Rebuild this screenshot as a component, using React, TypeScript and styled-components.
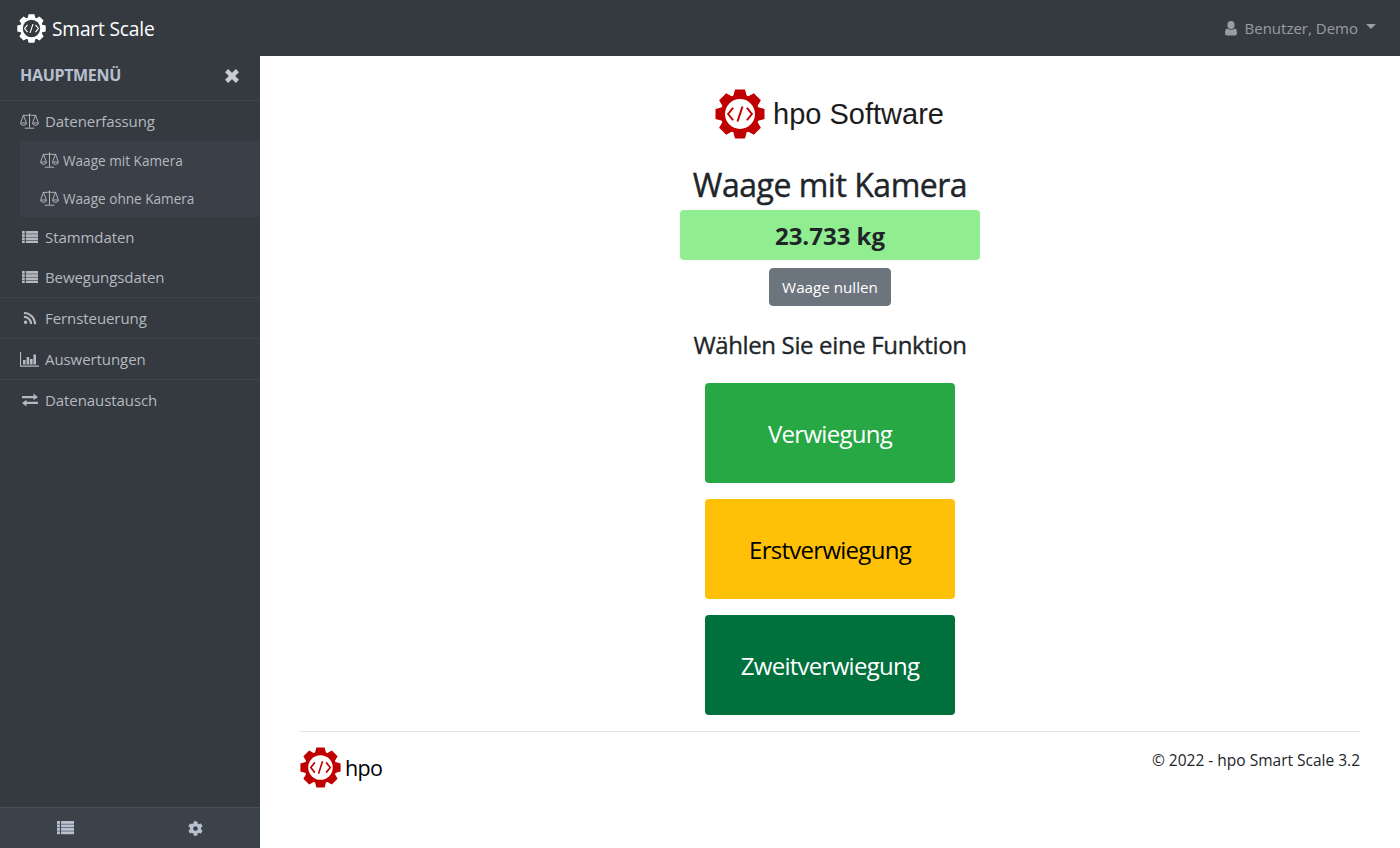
import React from "react";
import styled, { createGlobalStyle } from "styled-components";
import { FaRss, FaCog } from "react-icons/fa";

const Global = createGlobalStyle`
  html, body { margin: 0; padding: 0; height: 100%; background: #fff; overflow: hidden; }
  body { font-family: "Open Sans", "Noto Sans", "Liberation Sans", sans-serif; color: #212529; font-size: 16px; }
  * { box-sizing: border-box; }
`;

const Shell = styled.div`
  width: 1400px; height: 848px; display: flex; flex-direction: column;
`;
const TopBar = styled.header`
  height: 56px; flex: none; background: #343a40; display: flex; align-items: center;
  justify-content: space-between; padding: 0 16px 0 17px;
`;
const Brand = styled.div`
  display: flex; align-items: center; gap: 6px; color: #fff; font-size: 19.2px; letter-spacing: -0.01em;
`;
const UserMenu = styled.div`
  display: flex; align-items: center; color: rgba(255,255,255,.5); font-size: 15px;
  padding-right: 8px;
  svg { margin-right: 8px; }
`;
const Caret = styled.span`
  display: inline-block; margin-left: 8px; margin-top: -3px; border-top: 5px solid currentColor;
  border-left: 5px solid transparent; border-right: 5px solid transparent;
`;
const Body = styled.div`
  flex: 1; display: flex; min-height: 0;
`;
const Sidebar = styled.aside`
  width: 260px; flex: none; background: #343a40; display: flex; flex-direction: column;
`;
const SideHead = styled.div`
  height: 45px; display: flex; align-items: center; justify-content: space-between;
  padding: 0 20px 6px; color: #b8c0cf; font-weight: 700; font-size: 16px; letter-spacing: -0.02em;
  border-bottom: 1px solid #3c434a;
  svg { margin-top: 2px; }
`;
const Nav = styled.nav`
  flex: 1; display: flex; flex-direction: column;
`;
const Item = styled.div<{ $h: number; $line?: boolean }>`
  height: ${p => p.$h}px; display: flex; align-items: center; padding-left: 20px; gap: 6px;
  color: #b4b9bf; font-size: 15px; letter-spacing: -0.005em;
  border-bottom: ${p => (p.$line ? "1px solid #3c434a" : "none")};
`;
const IconBox = styled.span`
  width: 19px; display: inline-flex; justify-content: center; align-items: center; color: #b4b9bf;
  svg { display: block; }
`;
const SubMenu = styled.div`
  margin-left: 20px; background: #3b4048; display: flex; flex-direction: column;
`;
const SubItem = styled.div`
  height: 38px; display: flex; align-items: center; padding-left: 20px; gap: 4px;
  color: #b4b9bf; font-size: 13.6px;
`;
const SideFoot = styled.div`
  height: 41px; flex: none; background: #3c424a; border-top: 1px solid #4a5057; display: flex;
  align-items: center; color: #b8c0cf; font-size: 14px;
`;
const FootCell = styled.div`
  flex: 1; display: flex; justify-content: center; align-items: center;
`;
const Main = styled.main`
  flex: 1; padding: 0 40px; display: flex; flex-direction: column; background: #fff;
`;
const Center = styled.div`
  display: flex; flex-direction: column; align-items: center; padding-top: 33px;
`;
const Logo = styled.div`
  display: flex; align-items: center; gap: 8px; height: 50px; color: #1c1c1c;
  font-family: "Liberation Sans", Arial, sans-serif; font-size: 29px; margin-left: -1px;
`;
const Title = styled.h1`
  margin: 27px 0 0; font-size: 32px; line-height: 38px; font-weight: 500; letter-spacing: -0.015em;
  -webkit-text-stroke: 0.4px #212529;
`;
const Weight = styled.div`
  width: 300px; height: 50px; margin-top: 6px; background: #90ee90; border-radius: 4px;
  display: flex; align-items: center; justify-content: center; font-size: 24px; font-weight: 700;
`;
const ZeroButton = styled.button`
  margin-top: 8px; height: 38px; width: 122px; border: 1px solid #6c757d; background: #6c757d; color: #fff;
  font: inherit; font-size: 15.2px; border-radius: 4px; padding: 0;
`;
const Sub = styled.h2`
  margin: 24px 0 0; font-size: 24px; line-height: 29px; font-weight: 500; letter-spacing: -0.015em;
  -webkit-text-stroke: 0.35px #212529;
`;
const Actions = styled.div`
  margin-top: 24px; display: flex; flex-direction: column; gap: 16px;
`;
const Action = styled.button<{ $bg: string; $fg: string }>`
  width: 250px; height: 100px; border: 0; border-radius: 4px; background: ${p => p.$bg}; color: ${p => p.$fg};
  font: inherit; font-size: 24px; padding: 0; letter-spacing: -0.03em;
`;
const Footer = styled.footer`
  margin-top: 16px; border-top: 1px solid #e3e4e5; padding-top: 15px; display: flex; justify-content: space-between;
  align-items: flex-start;
`;
const FootLogo = styled.div`
  display: flex; align-items: center; gap: 4px; color: #000; font-size: 21.5px; height: 40px;
  letter-spacing: -0.03em;
`;
const Copy = styled.div`
  font-size: 15.5px; line-height: 24px; margin-top: 1px;
`;

function Gear({ size, color, hole, glyph }: { size: number; color: string; hole: string; glyph: string }) {
  const teeth = Array.from({ length: 8 }, (_, i) => i * 45);
  return (
    <svg width={size} height={size} viewBox="0 0 40 40">
      <circle cx="20" cy="20" r="15.5" fill={color} />
      {teeth.map(a => (
        <path key={a} d="M16 0.4 H24 L26 8 H14 Z" fill={color} transform={`rotate(${a} 20 20)`} />
      ))}
      <circle cx="20" cy="20" r="12" fill={hole} />
      <path d="M14.5 15 L10.5 20 L14.5 25 M25.5 15 L29.5 20 L25.5 25 M22 14 L18 26" fill="none" stroke={glyph} strokeWidth="1.6" />
    </svg>
  );
}

function Scale({ size }: { size: number }) {
  return (
    <svg width={size} height={size * 0.85} viewBox="0 0 20 17" fill="none" stroke="currentColor" strokeWidth="1">
      <path d="M10 0.5 V15.5 M5 16 H15 M3 2.5 H8 Q10 1.5 12 2.5 H17" />
      <path d="M3.6 2.5 L0.8 10 M3.6 2.5 L6.6 10 M0.4 10.5 H7 Q6.5 13 3.7 13 Q1 13 0.4 10.5 Z" />
      <path d="M16.4 2.5 L13.4 10 M16.4 2.5 L19.2 10 M13 10.5 H19.6 Q19 13 16.3 13 Q13.5 13 13 10.5 Z" />
    </svg>
  );
}

function ListIcon({ width }: { width: number }) {
  const rows = [0, 1, 2, 3];
  return (
    <svg width={width} height={width * 0.8} viewBox="0 0 16 12.8" fill="currentColor">
      {rows.map(i => (
        <g key={i}>
          <rect x="0" y={i * 3.25} width="2.8" height="2.7" />
          <rect x="3.8" y={i * 3.25} width="12.2" height="2.7" />
        </g>
      ))}
    </svg>
  );
}

function Bars() {
  return (
    <svg width="19" height="15" viewBox="0 0 19 15" fill="currentColor">
      <path d="M0 0 H1.1 V13.5 H19 V14.7 H0 Z" />
      <rect x="3" y="8" width="2.6" height="4.5" />
      <rect x="6.6" y="5" width="2.6" height="7.5" />
      <rect x="10" y="7" width="2.6" height="5.5" />
      <rect x="13.4" y="2.5" width="2.6" height="10" />
    </svg>
  );
}

function ExchangeIcon() {
  return (
    <svg width="16" height="14" viewBox="0 0 16 14" fill="currentColor">
      <path d="M0 3 H11.5 V0.4 L16 4.2 L11.5 7 V5.2 H0 Z" />
      <path d="M16 8.8 H4.5 V6.8 L0 10 L4.5 13.6 V11 H16 Z" />
    </svg>
  );
}

function CloseIcon() {
  return (
    <svg width="16" height="16" viewBox="0 0 16 16" fill="none" stroke="#c9cccf" strokeWidth="4.4">
      <path d="M2.6 2.6 L13.4 13.4 M13.4 2.6 L2.6 13.4" />
    </svg>
  );
}

function UserIcon() {
  return (
    <svg width="12" height="15" viewBox="0 0 12 15" fill="currentColor">
      <ellipse cx="6" cy="4" rx="3.6" ry="3.9" />
      <path d="M2 7.4 Q6 10 10 7.4 Q12 8.2 12 12 Q12 14.5 10 14.5 H2 Q0 14.5 0 12 Q0 8.2 2 7.4 Z" />
    </svg>
  );
}

export default function App() {
  return (
    <Shell>
      <Global />
      <TopBar>
        <Brand>
          <Gear size={29} color="#fff" hole="#343a40" glyph="#fff" />
          <span>Smart Scale</span>
        </Brand>
        <UserMenu>
          <UserIcon />
          <span>Benutzer, Demo</span>
          <Caret />
        </UserMenu>
      </TopBar>
      <Body>
        <Sidebar>
          <SideHead>
            <span>HAUPTMENÜ</span>
            <CloseIcon />
          </SideHead>
          <Nav>
            <Item $h={40}><IconBox><Scale size={19} /></IconBox><span>Datenerfassung</span></Item>
            <SubMenu>
              <SubItem><IconBox><Scale size={19} /></IconBox><span>Waage mit Kamera</span></SubItem>
              <SubItem><IconBox><Scale size={19} /></IconBox><span>Waage ohne Kamera</span></SubItem>
            </SubMenu>
            <Item $h={40}><IconBox><ListIcon width={16} /></IconBox><span>Stammdaten</span></Item>
            <Item $h={41} $line><IconBox><ListIcon width={16} /></IconBox><span>Bewegungsdaten</span></Item>
            <Item $h={41} $line><IconBox><FaRss size={14} /></IconBox><span>Fernsteuerung</span></Item>
            <Item $h={41} $line><IconBox><Bars /></IconBox><span>Auswertungen</span></Item>
            <Item $h={39}><IconBox><ExchangeIcon /></IconBox><span>Datenaustausch</span></Item>
          </Nav>
          <SideFoot>
            <FootCell><ListIcon width={17} /></FootCell>
            <FootCell><FaCog size={15} /></FootCell>
          </SideFoot>
        </Sidebar>
        <Main>
          <Center>
            <Logo>
              <Gear size={50} color="#c00000" hole="#fff" glyph="#c00000" />
              <span>hpo Software</span>
            </Logo>
            <Title>Waage mit Kamera</Title>
            <Weight>23.733 kg</Weight>
            <ZeroButton>Waage nullen</ZeroButton>
            <Sub>Wählen Sie eine Funktion</Sub>
            <Actions>
              <Action $bg="#28a745" $fg="#fff">Verwiegung</Action>
              <Action $bg="#ffc107" $fg="#000">Erstverwiegung</Action>
              <Action $bg="#00703c" $fg="#fff">Zweitverwiegung</Action>
            </Actions>
          </Center>
          <Footer>
            <FootLogo>
              <Gear size={41} color="#c00000" hole="#fff" glyph="#c00000" />
              <span>hpo</span>
            </FootLogo>
            <Copy>© 2022 - hpo Smart Scale 3.2</Copy>
          </Footer>
        </Main>
      </Body>
    </Shell>
  );
}
